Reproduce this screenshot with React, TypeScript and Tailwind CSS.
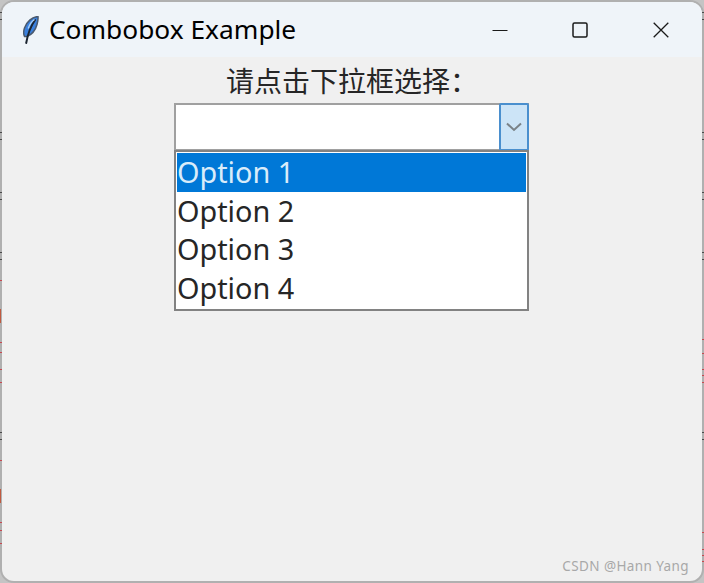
const uiFont = { fontFamily: '"Noto Sans", "Noto Sans CJK SC", sans-serif' };

const options = ['Option 1', 'Option 2', 'Option 3', 'Option 4'];

// bits of the window behind that show past the frame
const darkTicks = [12, 19, 132, 139, 192, 199, 252, 259, 432, 439];
const redLeft = [280, 342, 352, 369, 382, 460, 522, 530, 543];
const redRight = [339, 353, 369, 375, 382, 532, 549, 555, 561];

function Feather() {
  return (
    <svg width="16" height="28" viewBox="0 0 16 28" className="shrink-0">
      <path d="M15 0.5C9 1 3.5 6 1.5 12C0.4 15.5 0.4 18.5 1.6 20.5L4 20.5C9 18.5 12.5 14 14 8.5C14.8 5.5 15.3 3 15 0.5Z" fill="#3a80de" stroke="#4a5a70" strokeWidth="1.5" />
      <path d="M12 4C8.5 9 5 17 3.2 27" fill="none" stroke="#1b2430" strokeWidth="2" strokeLinecap="round" />
      <path d="M11.5 3.5C8.5 5.5 6.5 8.5 5.2 12.5" stroke="#a9d0f7" strokeWidth="1.4" fill="none" />
    </svg>
  );
}

function TitleBar() {
  return (
    <div className="flex h-[55px] items-center bg-[#eff4f9]">
      <div className="ml-[21px] flex w-[437px] items-center gap-[10px]">
        <Feather />
        <span className="text-[26.3px] leading-none text-black">Combobox Example</span>
      </div>
      <div className="flex">
        <div className="flex h-[55px] w-[80px] items-center justify-center">
          <svg width="16" height="16" viewBox="0 0 16 16">
            <path d="M0.5 8.5H15.5" stroke="#1a1a1a" strokeWidth="1" />
          </svg>
        </div>
        <div className="flex h-[55px] w-[80px] items-center justify-center">
          <svg width="16" height="16" viewBox="0 0 16 16">
            <rect x="1" y="1" width="14" height="14" rx="1.5" fill="none" stroke="#1a1a1a" strokeWidth="1.5" />
          </svg>
        </div>
        <div className="ml-[1px] flex h-[55px] w-[80px] items-center justify-center">
          <svg width="16" height="16" viewBox="0 0 16 16">
            <path d="M0.7 0.7L15.3 15.3M15.3 0.7L0.7 15.3" stroke="#1a1a1a" strokeWidth="1.3" />
          </svg>
        </div>
      </div>
    </div>
  );
}

function Combobox() {
  return (
    <div className="flex h-[48px] w-[355px] border-2 border-r-0 border-[#a0a0a0] bg-white">
      <div className="flex-1" />
      <div className="-my-[2px] flex w-[30px] items-center justify-center rounded-[2px] border-2 border-[#4a8fce] bg-[#cce4f7]">
        <svg width="16" height="10" viewBox="0 0 16 10">
          <path d="M1 1.5L8 8L15 1.5" fill="none" stroke="#7a8288" strokeWidth="2" />
        </svg>
      </div>
    </div>
  );
}

function Listbox() {
  return (
    <div className="-mt-px h-[161px] w-[355px] border-2 border-[#828282] bg-white p-px">
      {options.map((option, i) => (
        <div
          key={option}
          className={`h-[38.5px] text-[28.8px] leading-[38px] ${
            i === 0 ? 'bg-[#0078d7] text-[#d9ecfa]' : 'text-[#262626]'
          }`}
        >
          {option}
        </div>
      ))}
    </div>
  );
}

export default function App() {
  return (
    <div className="relative h-[583px] w-[704px] overflow-hidden bg-[#c4c4c4]" style={uiFont}>
      <div className="h-[583px] w-[704px] overflow-hidden rounded-[14px] border-2 border-[#b0b0b0] bg-[#f0f0f0]">
        <TitleBar />
        <div className="relative flex h-[524px] flex-col items-center">
          <div className="mt-[5px] h-[41px] text-[28px] leading-[39px] text-[#262626]">
            请点击下拉框选择：
          </div>
          <div className="mr-[1px] flex flex-col">
            <Combobox />
            <Listbox />
          </div>
          <span className="absolute bottom-[8px] right-[13px] text-[13.5px] leading-none tracking-[0.4px] text-[#a8a8a8]">
            CSDN @Hann Yang
          </span>
        </div>
      </div>
      {darkTicks.map((y) => (
        <div key={y}>
          <div className="absolute left-0 h-px w-[2px] bg-[#4a4a4a]" style={{ top: y }} />
          <div className="absolute right-0 h-px w-[2px] bg-[#4a4a4a]" style={{ top: y }} />
        </div>
      ))}
      {redLeft.map((y) => (
        <div key={y} className="absolute left-0 h-px w-[2px] bg-[#c8484f]" style={{ top: y }} />
      ))}
      {redRight.map((y) => (
        <div key={y} className="absolute right-0 h-px w-[2px] bg-[#c8484f]" style={{ top: y }} />
      ))}
      <div className="absolute left-0 top-[309px] h-[14px] w-px bg-[#c05a40]" />
      <div className="absolute left-0 top-[489px] h-[14px] w-px bg-[#c05a40]" />
    </div>
  );
}
